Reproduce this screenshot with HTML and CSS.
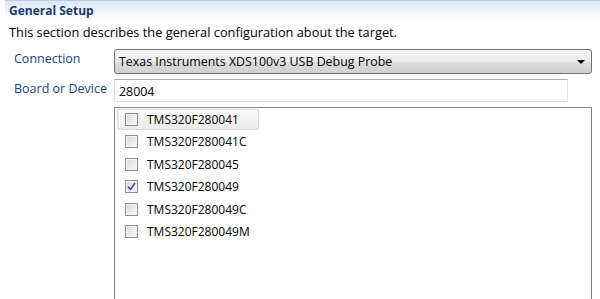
FILE: index.html
```html
<!DOCTYPE html>
<html lang="en">
<head>
    <meta charset="UTF-8">
    <title>General Setup</title>
    <link rel="stylesheet" href="styles.css">
</head>
<body>

    <!-- Section header -->
    <div class="section-title">General Setup</div>
    <p class="section-desc">This section describes the general configuration about the target.</p>

    <div class="form">
        <label class="field-label">Connection</label>
        <div class="combo">
            <span>Texas Instruments XDS100v3 USB Debug Probe</span>
            <span class="combo-arrow"></span>
        </div>

        <label class="field-label">Board or Device</label>
        <div class="text-input">28004</div>

        <div></div>
        <div class="device-list">
            <div class="device-item hover"><span class="check"></span>TMS320F280041</div>
            <div class="device-item"><span class="check"></span>TMS320F280041C</div>
            <div class="device-item"><span class="check"></span>TMS320F280045</div>
            <div class="device-item"><span class="check checked">
                <svg width="9" height="9" viewBox="0 0 9 9"><path d="M1 4.5 L3.5 7.5 L8 1" fill="none" stroke="#2f4fa8" stroke-width="1.6"/></svg>
            </span>TMS320F280049</div>
            <div class="device-item"><span class="check"></span>TMS320F280049C</div>
            <div class="device-item"><span class="check"></span>TMS320F280049M</div>
        </div>
    </div>

</body>
</html>
```

FILE: styles.css
```css
body {
    margin: 0;
    background-color: #ffffff;
    font-family: "Open Sans", "DejaVu Sans", sans-serif;
    font-size: 12px;
    color: #000000;
    height: 299px;
    overflow: hidden;
}

/* Header bar */
.section-title {
    height: 20px;
    margin-left: 5px;
    padding-left: 4px;
    border-top: 1px solid #b9cde3;
    background: linear-gradient(#dfe7f3, #ffffff);
    color: #1c3b6b;
    font-weight: bold;
    font-size: 12px;
    line-height: 19px;
    box-sizing: border-box;
}

.section-desc {
    margin: 4px 0 0 9px;
    font-size: 12.8px;
    line-height: 16px;
}

/* Form grid */
.form {
    display: grid;
    grid-template-columns: 100px 478px;
    column-gap: 0;
    row-gap: 5px;
    margin: 9px 0 0 14px;
}

.field-label {
    color: #23427a;
    font-size: 12.5px;
    line-height: 16px;
    padding-top: 2px;
    white-space: nowrap;
}

.combo {
    height: 25px;
    box-sizing: border-box;
    border: 1px solid #707070;
    border-radius: 3px;
    background: linear-gradient(#f3f3f3 0%, #ebebeb 50%, #dddddd 51%, #d0d0d0 100%);
    display: flex;
    align-items: center;
    justify-content: space-between;
    padding: 0 6px 0 4px;
    font-size: 12.4px;
}

.combo-arrow {
    width: 0;
    height: 0;
    border-left: 4px solid transparent;
    border-right: 4px solid transparent;
    border-top: 4px solid #000000;
}

.text-input {
    width: 454px;
    height: 23px;
    box-sizing: border-box;
    border: 1px solid #e2e3ea;
    border-top-color: #abadb3;
    padding: 3px 4px 0;
    font-size: 12.4px;
}

.device-list {
    height: 200px;
    box-sizing: border-box;
    border: 1px solid #828790;
    padding: 1px 0 0 2px;
}

.device-item {
    display: flex;
    align-items: center;
    width: 142px;
    height: 21px;
    margin-bottom: 1.4px;
    padding-left: 7px;
    box-sizing: border-box;
    border: 1px solid transparent;
    border-radius: 2px;
}

.device-item.hover {
    border-color: #d9d9d9;
    background: linear-gradient(#fafafa, #ebebeb);
}

.check {
    width: 13px;
    height: 13px;
    box-sizing: border-box;
    border: 1px solid #8e8f8f;
    background: linear-gradient(135deg, #dcdcdc, #f7f7f7);
    box-shadow: inset 0 0 0 1px #f4f4f4;
    margin-right: 9px;
    display: flex;
    align-items: center;
    justify-content: center;
}
```
